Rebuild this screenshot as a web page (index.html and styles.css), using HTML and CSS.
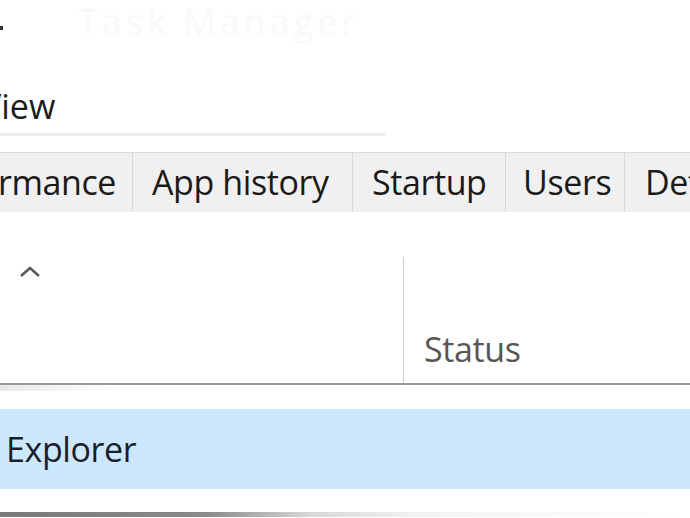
FILE: index.html
```html
<!DOCTYPE html>
<html>
<head>
<meta charset="utf-8">
<link rel="stylesheet" href="styles.css">
</head>
<body>
<div class="screen">
  <div class="titlebar">
    <span class="dot"></span>
    <span class="ghost">Task Manager</span>
  </div>
  <div class="menu"><span class="menu-item">View</span></div>
  <div class="tabs">
    <div class="tab tab-first"><span>Performance</span></div>
    <div class="tab tab-app">App history</div>
    <div class="tab tab-startup">Startup</div>
    <div class="tab tab-users">Users</div>
    <div class="tab tab-details">Details</div>
  </div>
  <div class="header">
    <div class="col col-name">
      <svg class="chevron" width="24" height="16" viewBox="0 0 24 16">
        <polyline points="3,13 12,5 21,13" fill="none" stroke="#5a5a5a" stroke-width="2.6"/>
      </svg>
    </div>
    <div class="col col-status"><span class="status">Status</span></div>
  </div>
  <div class="shade"></div>
  <div class="row selected"><span class="row-name">Explorer</span></div>
  <div class="bottom-line"></div>
</div>
</body>
</html>
```

FILE: styles.css
```css
html, body {
  margin: 0;
  padding: 0;
  background: #ffffff;
}
.screen {
  width: 690px;
  height: 518px;
  overflow: hidden;
  font-family: "Open Sans", "Noto Sans", sans-serif;
  color: #1a1a1a;
  position: relative;
}
.titlebar {
  height: 83px;
  display: flex;
  align-items: flex-start;
  overflow: hidden;
}
.dot {
  display: block;
  width: 3px;
  height: 4px;
  background: #333;
  margin-top: 26px;
  flex: none;
}
.ghost {
  margin-left: 75px;
  margin-top: 0;
  font-size: 36px;
  line-height: 44px;
  color: #f9f9f9;
  letter-spacing: 4px;
}
.menu {
  height: 50px;
  width: 385px;
  border-bottom: 3px solid #ececec;
  overflow: hidden;
}
.menu-item {
  display: block;
  margin-left: -19px;
  font-size: 34px;
  line-height: 46px;
  color: #1c1c1c;
}
.tabs {
  margin-top: 16px;
  height: 59px;
  border-top: 1px solid #dcdcdc;
  display: flex;
  background: #f0f0f0;
}
.tab {
  font-size: 34px;
  line-height: 58px;
  white-space: nowrap;
  box-sizing: border-box;
  border-right: 1px solid #d8d8d8;
  padding-left: 19px;
  overflow: hidden;
  flex: none;
  letter-spacing: -0.4px;
}
.tab-first {
  width: 133px;
  padding-left: 0;
  padding-right: 16px;
  display: flex;
  justify-content: flex-end;
}
.tab-app { width: 220px; }
.tab-startup { width: 153px; }
.tab-users { width: 119px; padding-left: 17px; }
.tab-details { flex: 1; border-right: none; padding-left: 20px; }
.header {
  height: 171px;
  border-bottom: 2px solid #9a9a9a;
  display: flex;
  align-items: flex-end;
}
.col-name {
  width: 403px;
  height: 100%;
  box-sizing: border-box;
  padding-top: 51px;
  padding-left: 18px;
}
.chevron { display: block; }
.col-status {
  flex: 1;
  height: 126px;
  border-left: 1px solid #cfcfcf;
  box-sizing: border-box;
  padding-left: 20px;
  padding-bottom: 11px;
  display: flex;
  align-items: flex-end;
}
.status {
  font-size: 34px;
  line-height: 46px;
  color: #575757;
  letter-spacing: -0.4px;
}
.shade {
  height: 6px;
  width: 120px;
  background: linear-gradient(to right, rgba(210,210,210,0.5), rgba(230,230,230,0));
}
.row {
  margin-top: 18px;
  height: 80px;
  padding-left: 6px;
}
.selected { background: #cce8ff; }
.row-name {
  font-size: 34px;
  line-height: 80px;
  color: #1b1d2b;
  letter-spacing: -0.4px;
}
.bottom-line {
  margin-top: 23px;
  height: 5px;
  background: linear-gradient(to right, #7a7a7a 0%, #8a8a8a 30%, #d8d8d8 45%, #f2f2f2 60%, #ffffff 100%);
}
```
